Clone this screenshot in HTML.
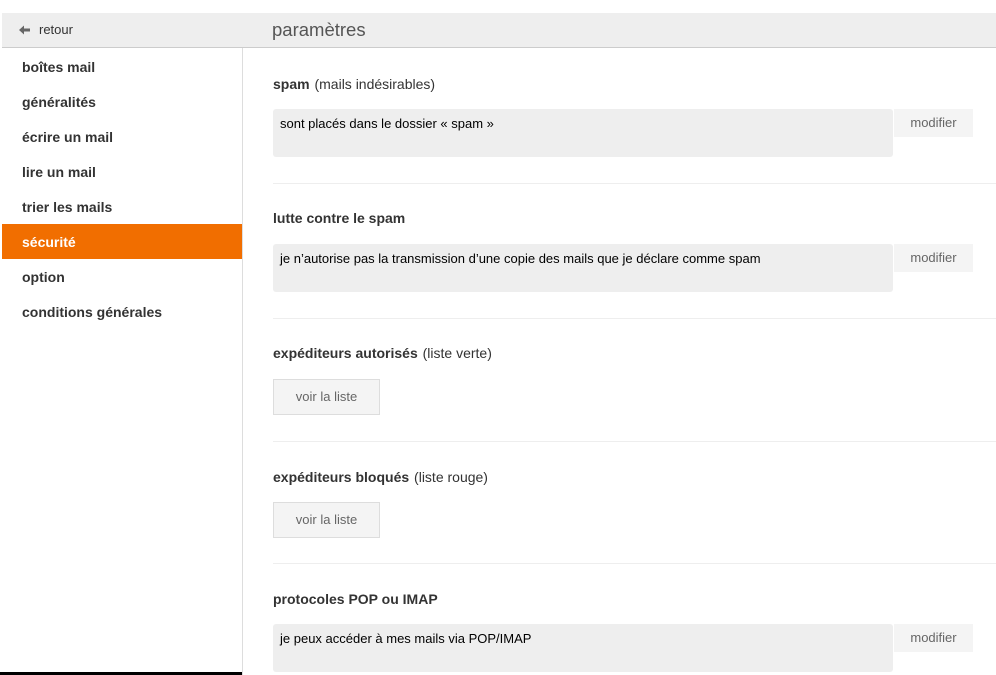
<!DOCTYPE html>
<html><head><meta charset="utf-8"><style>
*{margin:0;padding:0;box-sizing:border-box}
body{width:996px;height:675px;overflow:hidden;background:#fff;font-family:"Liberation Sans",Arial,sans-serif;position:relative}
.a{position:absolute}
.hdr{left:2px;top:13px;width:994px;height:35px;background:#eee;border-bottom:1px solid #ccc}
.side{left:242px;top:48px;width:1px;height:627px;background:#ddd}
.nav{left:22px;font-size:14px;font-weight:bold;color:#333;line-height:16px}
.h{left:273px;font-size:14px;color:#333;line-height:16px}
.h b{font-weight:bold;margin-right:1px}
.box{left:273px;width:620px;height:48px;background:#eee;border-radius:3px;font-size:13px;color:#000;padding:7px 7px;line-height:16px}
.mod{left:894px;width:79px;height:28px;background:#f4f4f4;color:#666;font-size:13px;text-align:center;line-height:27px}
.div{left:273px;width:723px;height:1px;background:#eee}
.vl{left:273px;width:107px;height:36px;background:#f4f4f4;border:1px solid #ddd;color:#666;font-size:13px;text-align:center;line-height:34px}
</style></head><body>
<div class="a hdr"></div>
<svg class="a" style="left:19px;top:25px" width="12" height="10" viewBox="0 0 12 10"><path d="M0 5 L5 0.5 L5 3.5 L11 3.5 L11 6.5 L5 6.5 L5 9.5 Z" fill="#666"/></svg>
<div class="a" style="left:39px;top:22px;font-size:13px;color:#333;line-height:16px">retour</div>
<div class="a" style="left:272px;top:19px;font-size:18.5px;color:#555;line-height:22px">paramètres</div>
<div class="a side"></div>
<div class="a nav" style="top:59px">boîtes mail</div>
<div class="a nav" style="top:94px">généralités</div>
<div class="a nav" style="top:129px">écrire un mail</div>
<div class="a nav" style="top:164px">lire un mail</div>
<div class="a nav" style="top:199px">trier les mails</div>
<div class="a" style="left:2px;top:224px;width:240px;height:35px;background:#f16e00"></div>
<div class="a nav" style="top:234px;color:#fff">sécurité</div>
<div class="a nav" style="top:269px">option</div>
<div class="a nav" style="top:304px">conditions générales</div>
<div class="a" style="left:0;top:672px;width:242px;height:3px;background:#000"></div>

<div class="a h" style="top:76px"><b>spam</b> (mails indésirables)</div>
<div class="a box" style="top:109px">sont placés dans le dossier « spam »</div>
<div class="a mod" style="top:109px">modifier</div>
<div class="a div" style="top:183px"></div>

<div class="a h" style="top:210px"><b>lutte contre le spam</b></div>
<div class="a box" style="top:244px">je n’autorise pas la transmission d’une copie des mails que je déclare comme spam</div>
<div class="a mod" style="top:244px">modifier</div>
<div class="a div" style="top:318px"></div>

<div class="a h" style="top:345px"><b>expéditeurs autorisés</b> (liste verte)</div>
<div class="a vl" style="top:379px">voir la liste</div>
<div class="a div" style="top:441px"></div>

<div class="a h" style="top:469px"><b>expéditeurs bloqués</b> (liste rouge)</div>
<div class="a vl" style="top:502px">voir la liste</div>
<div class="a div" style="top:563px"></div>

<div class="a h" style="top:591px"><b>protocoles POP ou IMAP</b></div>
<div class="a box" style="top:624px">je peux accéder à mes mails via POP/IMAP</div>
<div class="a mod" style="top:624px">modifier</div>
</body></html>
